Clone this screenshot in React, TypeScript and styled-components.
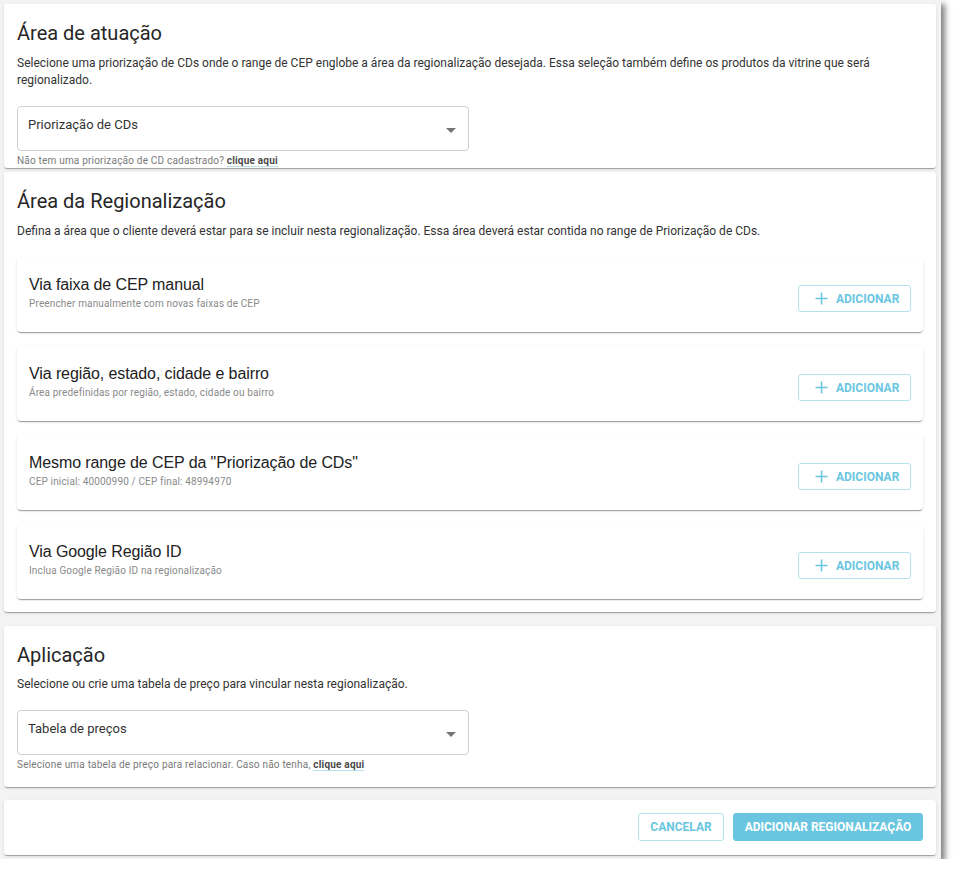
import React from "react";
import styled, { createGlobalStyle } from "styled-components";

const GlobalStyle = createGlobalStyle`
  html, body {
    margin: 0;
    padding: 0;
    background: #fff;
    font-family: Roboto, "Liberation Sans", Arial, sans-serif;
  }
  * { box-sizing: border-box; }
`;

const Frame = styled.div`
  width: 941px;
  padding: 4px 5px 4px 4px;
  background: #f3f3f3;
  box-shadow: 4px 4px 6px 0 rgba(0, 0, 0, 0.5);
`;

const Card = styled.section<{ $gap?: number; $bottom?: number }>`
  background: #fff;
  border-radius: 3px;
  padding: 17px 13px ${(p) => p.$bottom ?? 13}px 13px;
  margin-bottom: ${(p) => p.$gap ?? 14}px;
  box-shadow: 0 2px 1px -1px rgba(0, 0, 0, 0.2), 0 1px 1px 0 rgba(0, 0, 0, 0.12),
    0 1px 3px 0 rgba(0, 0, 0, 0.1);
`;

const Title = styled.h2`
  margin: 0;
  font-size: 20px;
  line-height: 24px;
  font-weight: 400;
  color: #262626;
`;

const Description = styled.p<{ $top?: number }>`
  margin: ${(p) => p.$top ?? 10}px 0 0;
  font-size: 12px;
  line-height: 17px;
  color: #333;
`;

const SelectBox = styled.div`
  width: 452px;
  height: 45px;
  margin-top: 17px;
  border: 1px solid #cfcfcf;
  border-radius: 4px;
  display: flex;
  justify-content: space-between;
  padding: 9px 12px 0 10px;
`;

const SelectLabel = styled.span`
  font-size: 13px;
  line-height: 18px;
  color: #333;
`;

const Arrow = styled.span`
  margin-top: 12px;
  width: 0;
  height: 0;
  border-left: 5px solid transparent;
  border-right: 5px solid transparent;
  border-top: 5px solid #757575;
`;

const Helper = styled.div`
  margin-top: 3px;
  font-size: 10px;
  line-height: 13px;
  letter-spacing: 0.2px;
  color: #7a7a7a;
`;

const HelperLink = styled.a`
  font-weight: 700;
  color: #4a4a4a;
  text-decoration: none;
  border-bottom: 1px solid #b9e2ee;
`;

const OptionList = styled.div`
  margin-top: 17px;
  display: flex;
  flex-direction: column;
  gap: 14px;
`;

const Option = styled.div`
  height: 75px;
  background: #fff;
  border-radius: 4px;
  display: flex;
  align-items: center;
  justify-content: space-between;
  padding: 0 12px;
  box-shadow: 0 2px 1px -1px rgba(0, 0, 0, 0.25), 0 1px 1px 0 rgba(0, 0, 0, 0.12),
    0 1px 3px 0 rgba(0, 0, 0, 0.1);
`;

const OptionText = styled.div`
  display: flex;
  flex-direction: column;
  margin-top: -4px;
`;

const OptionTitle = styled.div`
  font-family: "Liberation Sans", Arial, sans-serif;
  font-size: 16px;
  line-height: 20px;
  letter-spacing: -0.1px;
  color: #222;
`;

const OptionSub = styled.div`
  margin-top: 2px;
  font-size: 10px;
  line-height: 13px;
  letter-spacing: 0.15px;
  color: #8a8a8a;
`;

const Button = styled.button<{ $filled?: boolean }>`
  height: 28px;
  padding: 0 12px;
  border-radius: 3px;
  border: 1px solid ${(p) => (p.$filled ? "#6ac6e0" : "#b4e1ee")};
  background: ${(p) => (p.$filled ? "#6ac6e0" : "#fff")};
  color: ${(p) => (p.$filled ? "#fff" : "#6ac6e0")};
  font-family: Roboto, sans-serif;
  font-size: 12px;
  font-weight: 700;
  display: inline-flex;
  align-items: center;
  gap: 8px;
  cursor: pointer;
`;

const AddButton = styled(Button)`
  width: 113px;
  height: 27px;
  margin-top: 8px;
  padding: 0 0 0 16px;
`;

const Actions = styled.div`
  display: flex;
  justify-content: flex-end;
  gap: 9px;
`;

const ActionCard = styled(Card)`
  padding: 13px 13px 14px;
  margin-bottom: 0;
`;

const CancelButton = styled(Button)`
  width: 86px;
  justify-content: center;
`;

const ConfirmButton = styled(Button)`
  width: 190px;
  justify-content: center;
  padding: 0;
`;

const Plus = () => (
  <svg width="13" height="13" viewBox="0 0 13 13">
    <path d="M6.5 0.5v12M0.5 6.5h12" stroke="#6ac6e0" strokeWidth="1.6" />
  </svg>
);

const options = [
  { title: "Via faixa de CEP manual", sub: "Preencher manualmente com novas faixas de CEP" },
  { title: "Via região, estado, cidade e bairro", sub: "Área predefinidas por região, estado, cidade ou bairro" },
  { title: 'Mesmo range de CEP da "Priorização de CDs"', sub: "CEP inicial: 40000990 / CEP final: 48994970" },
  { title: "Via Google Região ID", sub: "Inclua Google Região ID na regionalização" },
];

export default function App() {
  return (
    <>
      <GlobalStyle />
      <Frame>
        <Card $gap={4} $bottom={1}>
          <Title>Área de atuação</Title>
          <Description>
            Selecione uma priorização de CDs onde o range de CEP englobe a área da regionalização
            desejada. Essa seleção também define os produtos da vitrine que será regionalizado.
          </Description>
          <SelectBox>
            <SelectLabel>Priorização de CDs</SelectLabel>
            <Arrow />
          </SelectBox>
          <Helper>
            Não tem uma priorização de CD cadastrado? <HelperLink>clique aqui</HelperLink>
          </Helper>
        </Card>

        <Card>
          <Title>Área da Regionalização</Title>
          <Description>
            Defina a área que o cliente deverá estar para se incluir nesta regionalização. Essa área
            deverá estar contida no range de Priorização de CDs.
          </Description>
          <OptionList>
            {options.map((o) => (
              <Option key={o.title}>
                <OptionText>
                  <OptionTitle>{o.title}</OptionTitle>
                  <OptionSub>{o.sub}</OptionSub>
                </OptionText>
                <AddButton>
                  <Plus />
                  ADICIONAR
                </AddButton>
              </Option>
            ))}
          </OptionList>
        </Card>

        <Card $bottom={16} $gap={13}>
          <Title>Aplicação</Title>
          <Description $top={9}>
            Selecione ou crie uma tabela de preço para vincular nesta regionalização.
          </Description>
          <SelectBox>
            <SelectLabel>Tabela de preços</SelectLabel>
            <Arrow />
          </SelectBox>
          <Helper>
            Selecione uma tabela de preço para relacionar. Caso não tenha, <HelperLink>clique aqui</HelperLink>
          </Helper>
        </Card>

        <ActionCard>
          <Actions>
            <CancelButton>CANCELAR</CancelButton>
            <ConfirmButton $filled>ADICIONAR REGIONALIZAÇÃO</ConfirmButton>
          </Actions>
        </ActionCard>
      </Frame>
    </>
  );
}
